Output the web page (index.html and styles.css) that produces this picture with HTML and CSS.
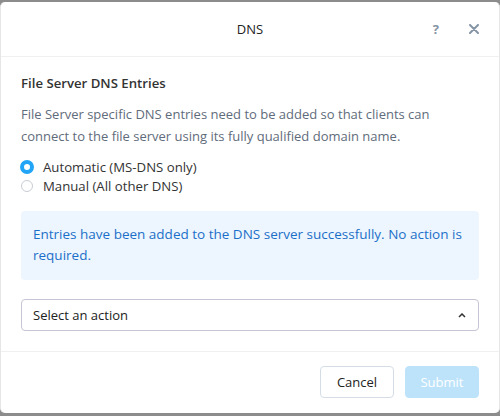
FILE: index.html
```html
<!DOCTYPE html>
<html>
<head>
<meta charset="utf-8">
<link rel="stylesheet" href="styles.css">
</head>
<body>
<div class="modal">
  <div class="header">
    <div class="title">DNS</div>
    <div class="actions">
      <span class="help">?</span>
      <svg class="close" width="10" height="10" viewBox="0 0 10 10"><path d="M1 1L9 9M9 1L1 9" stroke="#8594a4" stroke-width="2" stroke-linecap="round"/></svg>
    </div>
  </div>
  <div class="body">
    <div class="heading">File Server DNS Entries</div>
    <p class="desc">File Server specific DNS entries need to be added so that clients can connect to the file server using its fully qualified domain name.</p>
    <div class="radios">
      <label class="radio"><span class="dot checked"></span>Automatic (MS-DNS only)</label>
      <label class="radio"><span class="dot"></span>Manual (All other DNS)</label>
    </div>
    <div class="info">Entries have been added to the DNS server successfully. No action is required.</div>
    <div class="select">
      <span>Select an action</span>
      <svg width="8" height="5" viewBox="0 0 8 5"><path d="M1 4L4 1L7 4" stroke="#333" stroke-width="1.5" fill="none"/></svg>
    </div>
  </div>
  <div class="footer">
    <button class="btn cancel">Cancel</button>
    <button class="btn submit">Submit</button>
  </div>
</div>
</body>
</html>
```
FILE: styles.css
```css
html, body { margin: 0; padding: 0; }
body {
  background: #8c8c8c;
  font-family: "Open Sans", "Liberation Sans", sans-serif;
  font-size: 13px;
  height: 416px;
  overflow: hidden;
}
.modal {
  margin-top: 2px;
  height: 411px;
  background: #fff;
  border-radius: 5px;
  border-left: 1px solid #e6e6e6;
  border-right: 1px solid #e6e6e6;
  box-sizing: border-box;
  display: flex;
  flex-direction: column;
}
.header {
  height: 54px;
  border-bottom: 1px solid #f0f0f0;
  display: flex;
  align-items: center;
  justify-content: center;
  position: relative;
}
.title { color: #222; font-size: 13px; }
.actions {
  position: absolute;
  right: 20px;
  top: 0;
  height: 54px;
  display: flex;
  align-items: center;
  gap: 30px;
}
.help { color: #8594a4; font-weight: 700; font-size: 13px; }
.body { padding: 17px 20px 0 20px; flex: 1; }
.heading { color: #333; font-weight: 600; font-size: 13.2px; line-height: 18px; }
.desc { color: #5f6c7b; margin: 11px 0 0; line-height: 22px; }
.radios { margin-top: 11px; display: flex; flex-direction: column; gap: 1px; }
.radio { display: flex; align-items: center; color: #333; line-height: 18px; font-size: 13.2px; }
.dot {
  width: 12px; height: 12px; border-radius: 50%;
  border: 1px solid #c8cdd3; box-sizing: border-box;
  margin-right: 10px;
}
.dot.checked { border: 4px solid #22a5f7; background: #fff; width: 14px; height: 14px; margin-right: 9px; margin-left: -1px; }
.info {
  margin-top: 16px;
  background: #edf6fe;
  border-radius: 4px;
  color: #1b6fc9;
  padding: 13px 12px 14px;
  line-height: 21px;
  font-size: 13.5px;
}
.select {
  margin-top: 19px;
  height: 32px;
  border: 1px solid #c5c5d4;
  border-radius: 4px;
  box-sizing: border-box;
  display: flex;
  align-items: center;
  justify-content: space-between;
  padding: 0 12px 0 11px;
  color: #222;
}
.footer {
  height: 62px;
  border-top: 1px solid #f0f0f0;
  display: flex;
  justify-content: flex-end;
  align-items: flex-start;
  gap: 11px;
  padding: 14px 20px 0 0;
  box-sizing: border-box;
}
.btn {
  width: 74px; height: 32px;
  border-radius: 4px;
  font-family: inherit;
  font-size: 13px;
}
.cancel { background: #fff; border: 1px solid #d5dee7; color: #222; }
.submit { background: #bde3fb; border: 1px solid #bde3fb; color: #fff; }
```
